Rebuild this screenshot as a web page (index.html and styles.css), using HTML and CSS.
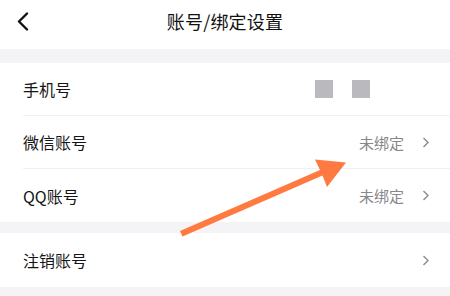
FILE: index.html
```html
<!DOCTYPE html>
<html lang="zh">
<head>
<meta charset="utf-8">
<link rel="stylesheet" href="styles.css">
</head>
<body>
<div class="page">
  <header class="nav">
    <svg class="back" width="12" height="19" viewBox="0 0 12 19"><path d="M10 1.5 L2 9.5 L10 17.5" fill="none" stroke="#111" stroke-width="2.4" stroke-linecap="round" stroke-linejoin="round"/></svg>
    <div class="title">账号/绑定设置</div>
  </header>
  <div class="group">
    <div class="row">
      <span class="label">手机号</span>
      <span class="masked"><i class="sq"></i><i class="sq"></i></span>
    </div>
    <div class="row">
      <span class="label">微信账号</span>
      <span class="value">未绑定</span>
      <svg class="chev" width="8" height="11" viewBox="0 0 8 11"><path d="M1.5 1 L6 5.5 L1.5 10" fill="none" stroke="#8a8a8f" stroke-width="1.4"/></svg>
    </div>
    <div class="row last">
      <span class="label">QQ账号</span>
      <span class="value">未绑定</span>
      <svg class="chev" width="8" height="11" viewBox="0 0 8 11"><path d="M1.5 1 L6 5.5 L1.5 10" fill="none" stroke="#8a8a8f" stroke-width="1.4"/></svg>
    </div>
  </div>
  <div class="group second">
    <div class="row last tall">
      <span class="label">注销账号</span>
      <span class="value"></span>
      <svg class="chev" width="8" height="11" viewBox="0 0 8 11"><path d="M1.5 1 L6 5.5 L1.5 10" fill="none" stroke="#8a8a8f" stroke-width="1.4"/></svg>
    </div>
  </div>
  <svg class="arrow" width="450" height="296" viewBox="0 0 450 296">
    <path d="M180 231 L320 170 L315 159.5 L346 162.5 L327 187 L322.5 175.5 L182.5 236.5 Z" fill="#ff7a40"/>
  </svg>
</div>
</body>
</html>
```
FILE: styles.css
```css
* { box-sizing: border-box; }
html, body { margin: 0; padding: 0; }
body {
  width: 450px;
  height: 296px;
  overflow: hidden;
  background: #f4f4f6;
  font-family: "Noto Sans CJK SC", "Noto Sans", sans-serif;
}
.page { position: relative; width: 450px; height: 296px; }
.nav {
  height: 49px;
  background: #fff;
  display: flex;
  align-items: center;
  justify-content: center;
  position: relative;
}
.back { position: absolute; left: 17px; top: 12px; }
.title {
  font-size: 18px;
  color: #111;
  margin-top: -8px;
  letter-spacing: 0.2px;
}
.group { background: #fff; margin-top: 14px; }
.group.second { margin-top: 11px; }
.row {
  height: 53px;
  margin-left: 23px;
  padding-right: 20px;
  display: flex;
  align-items: center;
  border-bottom: 1px solid #f0f0f2;
}
.row.last { border-bottom: none; }
.row.tall { height: 54px; }
.label { font-size: 16px; color: #151515; flex: 1; }
.value { font-size: 15px; color: #86868b; margin-right: 18px; }
.chev { display: block; }
.masked { display: flex; align-items: center; gap: 19px; margin-right: 60px; }
.sq { display: block; width: 18px; height: 18px; background: #b9b9be; }
.arrow { position: absolute; left: 0; top: 0; pointer-events: none; }
```
